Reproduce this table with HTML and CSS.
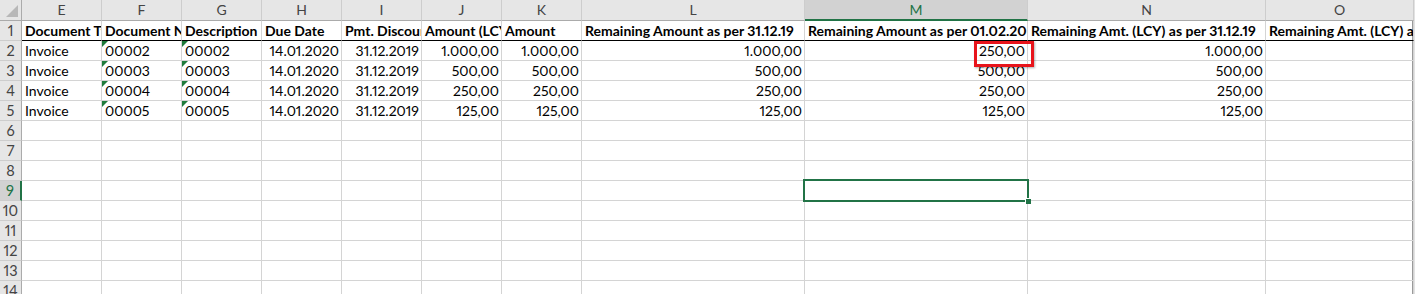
FILE: index.html
```html
<!DOCTYPE html>
<html>
<head>
<meta charset="utf-8">
<link rel="stylesheet" href="styles.css">
</head>
<body>
<div class="sheet">
  <div class="grid">
    <div class="row colhead">
      <div class="c corner"><svg class="tri" width="12" height="12" viewBox="0 0 12 12"><polygon points="12,0 12,12 0,12" fill="#b8b8b8"/></svg></div>
      <div class="c ch">E</div><div class="c ch">F</div><div class="c ch">G</div><div class="c ch">H</div><div class="c ch">I</div><div class="c ch">J</div><div class="c ch">K</div><div class="c ch">L</div><div class="c ch sel">M</div><div class="c ch">N</div><div class="c ch">O</div>
    </div>
    <div class="row hdr">
      <div class="c rh">1</div>
      <div class="c b">Document Type</div><div class="c b">Document No.</div><div class="c b">Description</div><div class="c b">Due Date</div><div class="c b">Pmt. Discount Date</div><div class="c b">Amount (LCY)</div><div class="c b">Amount</div><div class="c b">Remaining Amount as per 31.12.19</div><div class="c b">Remaining Amount as per 01.02.20</div><div class="c b">Remaining Amt. (LCY) as per 31.12.19</div><div class="c b">Remaining Amt. (LCY) as per 01.02.20</div>
    </div>
    <div class="row">
      <div class="c rh">2</div>
      <div class="c">Invoice</div><div class="c t">00002</div><div class="c t">00002</div><div class="c r">14.01.2020</div><div class="c r">31.12.2019</div><div class="c r">1.000,00</div><div class="c r">1.000,00</div><div class="c r">1.000,00</div><div class="c r mark">250,00<span class="redbox"></span></div><div class="c r">1.000,00</div><div class="c"></div>
    </div>
    <div class="row">
      <div class="c rh">3</div>
      <div class="c">Invoice</div><div class="c t">00003</div><div class="c t">00003</div><div class="c r">14.01.2020</div><div class="c r">31.12.2019</div><div class="c r">500,00</div><div class="c r">500,00</div><div class="c r">500,00</div><div class="c r">500,00</div><div class="c r">500,00</div><div class="c"></div>
    </div>
    <div class="row">
      <div class="c rh">4</div>
      <div class="c">Invoice</div><div class="c t">00004</div><div class="c t">00004</div><div class="c r">14.01.2020</div><div class="c r">31.12.2019</div><div class="c r">250,00</div><div class="c r">250,00</div><div class="c r">250,00</div><div class="c r">250,00</div><div class="c r">250,00</div><div class="c"></div>
    </div>
    <div class="row">
      <div class="c rh">5</div>
      <div class="c">Invoice</div><div class="c t">00005</div><div class="c t">00005</div><div class="c r">14.01.2020</div><div class="c r">31.12.2019</div><div class="c r">125,00</div><div class="c r">125,00</div><div class="c r">125,00</div><div class="c r">125,00</div><div class="c r">125,00</div><div class="c"></div>
    </div>
    <div class="row"><div class="c rh">6</div><div class="c"></div><div class="c"></div><div class="c"></div><div class="c"></div><div class="c"></div><div class="c"></div><div class="c"></div><div class="c"></div><div class="c"></div><div class="c"></div><div class="c"></div></div>
    <div class="row"><div class="c rh">7</div><div class="c"></div><div class="c"></div><div class="c"></div><div class="c"></div><div class="c"></div><div class="c"></div><div class="c"></div><div class="c"></div><div class="c"></div><div class="c"></div><div class="c"></div></div>
    <div class="row"><div class="c rh">8</div><div class="c"></div><div class="c"></div><div class="c"></div><div class="c"></div><div class="c"></div><div class="c"></div><div class="c"></div><div class="c"></div><div class="c"></div><div class="c"></div><div class="c"></div></div>
    <div class="row"><div class="c rh rsel">9</div><div class="c"></div><div class="c"></div><div class="c"></div><div class="c"></div><div class="c"></div><div class="c"></div><div class="c"></div><div class="c"></div><div class="c active"><span class="selbox"></span><span class="handle"></span></div><div class="c"></div><div class="c"></div></div>
    <div class="row"><div class="c rh">10</div><div class="c"></div><div class="c"></div><div class="c"></div><div class="c"></div><div class="c"></div><div class="c"></div><div class="c"></div><div class="c"></div><div class="c"></div><div class="c"></div><div class="c"></div></div>
    <div class="row"><div class="c rh">11</div><div class="c"></div><div class="c"></div><div class="c"></div><div class="c"></div><div class="c"></div><div class="c"></div><div class="c"></div><div class="c"></div><div class="c"></div><div class="c"></div><div class="c"></div></div>
    <div class="row"><div class="c rh">12</div><div class="c"></div><div class="c"></div><div class="c"></div><div class="c"></div><div class="c"></div><div class="c"></div><div class="c"></div><div class="c"></div><div class="c"></div><div class="c"></div><div class="c"></div></div>
    <div class="row"><div class="c rh">13</div><div class="c"></div><div class="c"></div><div class="c"></div><div class="c"></div><div class="c"></div><div class="c"></div><div class="c"></div><div class="c"></div><div class="c"></div><div class="c"></div><div class="c"></div></div>
    <div class="row"><div class="c rh">14</div><div class="c"></div><div class="c"></div><div class="c"></div><div class="c"></div><div class="c"></div><div class="c"></div><div class="c"></div><div class="c"></div><div class="c"></div><div class="c"></div><div class="c"></div></div>
  </div>
  <div class="edge"></div>
</div>
</body>
</html>
```

FILE: styles.css
```css
html, body {
  margin: 0;
  padding: 0;
  background: #ffffff;
  overflow: hidden;
}
body {
  width: 1415px;
  height: 294px;
  font-family: "Lato", "Liberation Sans", sans-serif;
  font-size: 14px;
  font-variant-numeric: proportional-nums;
  color: #000;
}
.sheet {
  display: flex;
  width: 1415px;
  height: 294px;
  overflow: hidden;
}
.grid {
  width: 1412px;
  display: flex;
  flex-direction: column;
}
.edge {
  width: 3px;
  border-left: 1px solid #9a9a9a;
  background: #e2e2e2;
  box-sizing: border-box;
}
.row {
  display: grid;
  grid-template-columns: 22px 80px 80px 80px 80px 80px 80px 80px 223px 223px 238px 148px;
  height: 20px;
  flex: none;
}
.c {
  position: relative;
  box-sizing: border-box;
  height: 20px;
  border-right: 1px solid #d4d4d4;
  border-bottom: 1px solid #d4d4d4;
  padding: 0 2px 0 3px;
  line-height: 20px;
  white-space: nowrap;
  overflow: hidden;
}
.r { text-align: right; }
.b { font-weight: 700; }
.hdr .c:not(.rh) { border-bottom-color: #000; }

.colhead { height: 21px; }
.colhead .c {
  height: 21px;
  background: #e6e6e6;
  border-right-color: #cdcdcd;
  border-bottom-color: #ababab;
  text-align: center;
  color: #444;
  padding: 0;
  line-height: 20px;
}
.colhead .corner { border-right-color: #ababab; }
.corner .tri { position: absolute; right: 3px; bottom: 3px; }
.colhead .sel {
  background: #d2d2d2;
  color: #217346;
  border-bottom: 2px solid #217346;
  line-height: 20px;
}

.rh {
  background: #e6e6e6;
  border-right-color: #ababab;
  border-bottom-color: #cdcdcd;
  color: #444;
  text-align: center;
  padding: 0;
  font-size: 14.5px;
}
.rh.rsel {
  background: #d2d2d2;
  color: #217346;
  border-right: 2px solid #217346;
}

.t::before {
  content: "";
  position: absolute;
  left: 0;
  top: 0;
  border-top: 6px solid #1e7b3a;
  border-right: 6px solid transparent;
}

.row .c.mark, .row .c.active { overflow: visible; z-index: 2; }
.redbox {
  position: absolute;
  left: 169px;
  top: 0px;
  width: 60px;
  height: 26px;
  box-sizing: border-box;
  border: 3px solid #e8141b;
  box-shadow: 1px 1px 2px rgba(0,0,0,0.3);
  z-index: 3;
}
.selbox {
  position: absolute;
  left: -2px;
  top: -2px;
  right: -2px;
  bottom: -2px;
  border: 2px solid #217346;
}
.handle {
  position: absolute;
  right: -4px;
  bottom: -4px;
  width: 5px;
  height: 5px;
  background: #217346;
  border: 1px solid #fff;
  border-right: none;
  border-bottom: none;
}
```
